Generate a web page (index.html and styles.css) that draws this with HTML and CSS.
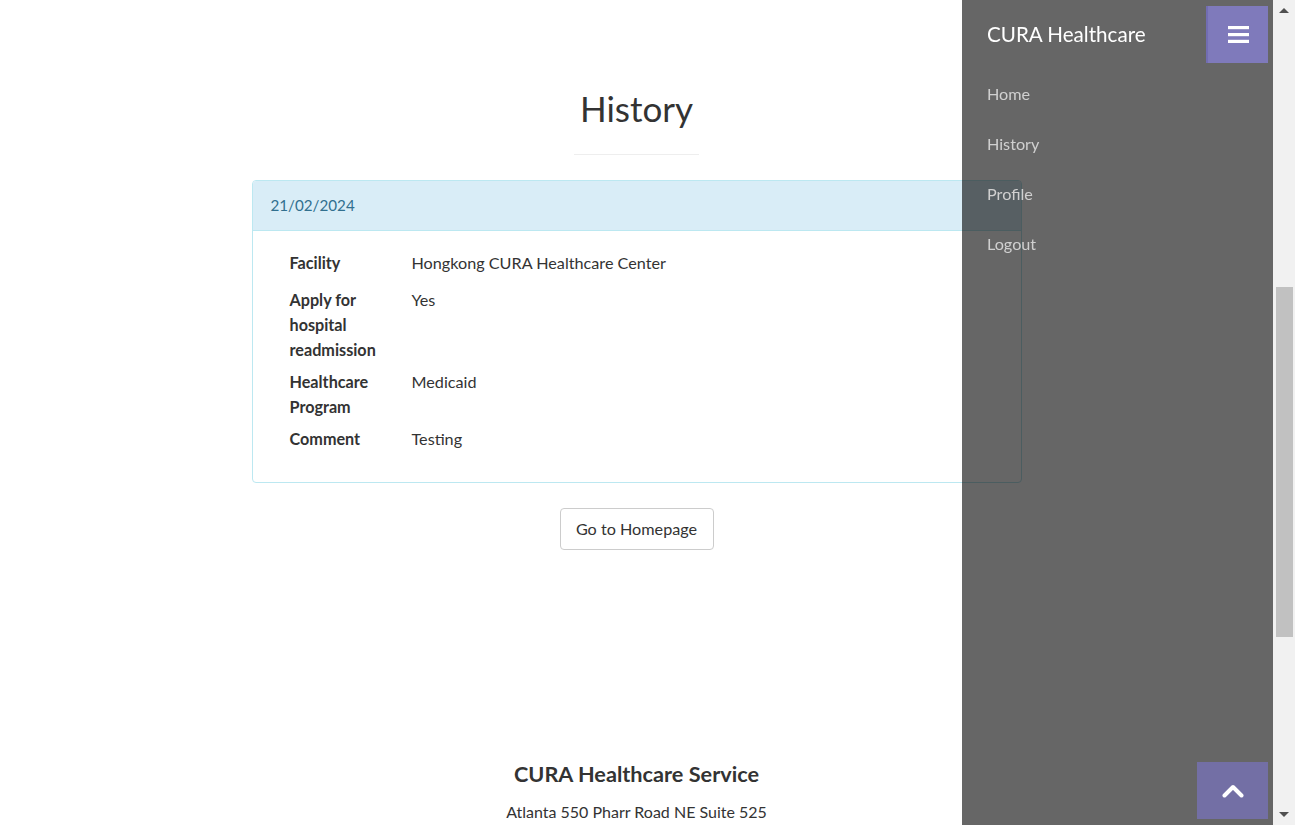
FILE: index.html
```html
<!DOCTYPE html>
<html lang="en">
<head>
<meta charset="utf-8">
<title>CURA Healthcare Service</title>
<link rel="stylesheet" href="styles.css">
</head>
<body>
<div class="viewport">
  <main class="page">
    <section class="history">
      <h2 class="title">History</h2>
      <hr class="title-rule">
      <div class="panel">
        <div class="panel-heading">21/02/2024</div>
        <div class="panel-body">
          <div class="field field-first">
            <div class="label">Facility</div>
            <div class="value">Hongkong CURA Healthcare Center</div>
          </div>
          <div class="field">
            <div class="label">Apply for hospital readmission</div>
            <div class="value">Yes</div>
          </div>
          <div class="field">
            <div class="label">Healthcare Program</div>
            <div class="value">Medicaid</div>
          </div>
          <div class="field">
            <div class="label">Comment</div>
            <div class="value">Testing</div>
          </div>
        </div>
      </div>
      <div class="actions">
        <a class="btn" href="#">Go to Homepage</a>
      </div>
    </section>
    <footer class="footer">
      <h4 class="footer-title">CURA Healthcare Service</h4>
      <p class="footer-address">Atlanta 550 Pharr Road NE Suite 525</p>
    </footer>
  </main>
  <div class="scrollbar">
    <span class="sb-arrow sb-up"></span>
    <div class="sb-track"><div class="sb-thumb"></div></div>
    <span class="sb-arrow sb-down"></span>
  </div>
</div>

<nav class="sidebar">
  <div class="sidebar-brand">CURA Healthcare</div>
  <ul class="sidebar-nav">
    <li><a href="#">Home</a></li>
    <li><a href="#">History</a></li>
    <li><a href="#">Profile</a></li>
    <li><a href="#">Logout</a></li>
  </ul>
</nav>

<a class="menu-toggle" href="#" aria-label="Menu">
  <svg width="21" height="17" viewBox="0 0 21 17"><rect x="0" y="0" width="21" height="3.2" fill="#fff"/><rect x="0" y="7" width="21" height="3.2" fill="#fff"/><rect x="0" y="13.8" width="21" height="3.2" fill="#fff"/></svg>
</a>

<a class="to-top" href="#" aria-label="Top">
  <svg width="22" height="14" viewBox="0 0 22 14"><path d="M2.5 11.5 L11 3 L19.5 11.5" fill="none" stroke="#fff" stroke-width="4" stroke-linecap="round" stroke-linejoin="round"/></svg>
</a>
</body>
</html>
```

FILE: styles.css
```css
* { box-sizing: border-box; }

html, body {
  margin: 0;
  padding: 0;
  height: 100%;
  overflow: hidden;
  background: #fff;
}

body {
  font-family: Lato, "Open Sans", sans-serif;
  font-size: 16.2px;
  color: #333;
}

.viewport {
  display: flex;
  height: 100vh;
}

.page {
  flex: 1;
  min-width: 0;
}

.history {
  padding-top: 88px;
}

.title {
  margin: 0;
  font-size: 35px;
  font-weight: 400;
  line-height: 40px;
  text-align: center;
  color: #333;
}

.title-rule {
  width: 125px;
  margin: 26px auto 25px;
  border: 0;
  border-top: 1px solid #eee;
  height: 0;
}

.panel {
  width: 770px;
  margin: 0 auto;
  border: 1px solid #bce8f1;
  border-radius: 4px;
  background: #fff;
}

.panel-heading {
  height: 50px;
  line-height: 48px;
  padding: 0 18px;
  font-size: 15.2px;
  background: #d9edf7;
  color: #31708f;
  border-bottom: 1px solid #bce8f1;
  border-radius: 3px 3px 0 0;
}

.panel-body {
  padding: 19px 37px 31px;
}

.field {
  display: flex;
  line-height: 25px;
  margin-top: 7px;
}

.field-first {
  margin-top: 0;
  margin-bottom: 12px;
}

.label {
  width: 122px;
  flex: none;
  padding-right: 12px;
  font-weight: 700;
}

.value {
  flex: 1;
}

.actions {
  display: flex;
  justify-content: center;
  margin-top: 25px;
}

.btn {
  display: inline-block;
  width: 154px;
  height: 42px;
  line-height: 40px;
  text-align: center;
  border: 1px solid #ccc;
  border-radius: 4px;
  color: #333;
  text-decoration: none;
  background: #fff;
}

.footer {
  padding-top: 209px;
  text-align: center;
}

.footer-title {
  margin: 0;
  font-size: 21.7px;
  line-height: 30px;
  font-weight: 700;
}

.footer-address {
  margin: 11px 0 0;
  font-size: 16px;
  line-height: 24px;
}

/* fake browser scrollbar */
.scrollbar {
  width: 22px;
  flex: none;
  background: #f1f1f1;
  display: flex;
  flex-direction: column;
  align-items: center;
}

.sb-track {
  flex: 1;
  width: 100%;
  padding: 274px 2px 0 3px;
}

.sb-thumb {
  height: 350px;
  background: #c1c1c1;
}

.sb-arrow {
  width: 0;
  height: 0;
  border-left: 5px solid transparent;
  border-right: 5px solid transparent;
}

.sb-up {
  margin-top: 8px;
  border-bottom: 5px solid #505050;
}

.sb-down {
  margin-bottom: 8px;
  border-top: 5px solid #505050;
}

/* overlays */
.sidebar {
  position: fixed;
  top: 0;
  bottom: 0;
  right: 22px;
  width: 311px;
  background: rgba(0, 0, 0, 0.6);
  padding: 9px 0 0 25px;
}

.sidebar-brand {
  font-size: 20.6px;
  line-height: 50px;
  color: #fff;
}

.sidebar-nav {
  list-style: none;
  margin: 10px 0 0;
  padding: 0;
}

.sidebar-nav a {
  display: block;
  line-height: 50px;
  color: #d0d0d0;
  text-decoration: none;
}

.menu-toggle {
  position: fixed;
  top: 6px;
  right: 27px;
  width: 62px;
  height: 57px;
  background: #7f7abb;
  border-left: 2px solid #726db2;
  display: flex;
  align-items: center;
  justify-content: center;
}

.to-top {
  position: fixed;
  bottom: 6px;
  right: 27px;
  width: 71px;
  height: 57px;
  background: #736fa5;
  display: flex;
  align-items: center;
  justify-content: center;
}
```
